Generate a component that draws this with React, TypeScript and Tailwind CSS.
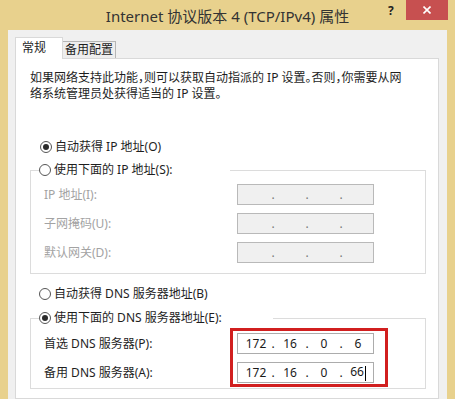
import React from "react";

// Windows 8 style "Internet 协议版本 4 (TCP/IPv4) 属性" dialog

const Radio = ({ checked = false }: { checked?: boolean }) => (
  <span className="inline-flex h-[12px] w-[12px] shrink-0 items-center justify-center rounded-full border border-[#555] bg-white">
    {checked && <span className="h-[6px] w-[6px] rounded-full bg-[#2b2b2b]" />}
  </span>
);

const RadioRow = ({ label, checked }: { label: string; checked?: boolean }) => (
  <span className="flex h-[16px] items-center gap-[3px] text-[#1e1e1e]">
    <Radio checked={checked} />
    <span className="whitespace-nowrap">{label}</span>
  </span>
);

interface IpBoxProps {
  parts: string[];
  disabled?: boolean;
  cursor?: boolean;
}

const IpBox = ({ parts, disabled = false, cursor = false }: IpBoxProps) => (
  <div
    className={
      "flex h-[21px] w-[137px] items-center border pl-[3px] " +
      (disabled
        ? "border-[#b9b9b9] bg-[#f0f0f0] text-[#7a7a7a]"
        : "border-[#acacac] bg-white text-[#1a1a1a]")
    }
  >
    {[0, 1, 2, 3].map((i) => (
      <React.Fragment key={i}>
        <span className="w-[30px] whitespace-nowrap text-center">
          {parts[i]}
          {cursor && i === 3 && (
            <span className="ml-px inline-block h-[15px] w-px bg-black align-middle" />
          )}
        </span>
        {i < 3 && <span className="w-[4px] text-center">.</span>}
      </React.Fragment>
    ))}
  </div>
);

const FieldRow = ({
  label,
  dim,
  children,
}: {
  label: string;
  dim?: boolean;
  children: React.ReactNode;
}) => (
  <div className="flex items-center">
    <span
      className={
        "w-[193px] whitespace-nowrap " + (dim ? "text-[#a3a3a3]" : "text-[#1e1e1e]")
      }
    >
      {label}
    </span>
    {children}
  </div>
);

export default function App() {
  return (
    <div className="flex h-[399px] w-[455px] flex-col overflow-hidden bg-[#e8d18d] font-['Noto_Sans','Noto_Sans_CJK_SC',sans-serif] text-[12px] leading-[16px] [font-feature-settings:'halt']">
      {/* title bar */}
      <div className="relative flex h-[30px] shrink-0 items-center justify-center">
        <span className="pt-px text-[15px] text-[#333]">Internet 协议版本 4 (TCP/IPv4) 属性</span>
        <span className="absolute left-[388px] top-[3px] text-[12px] font-bold text-[#222]">?</span>
        <span className="absolute right-[7px] top-0 flex h-[20px] w-[42px] items-center justify-center bg-[#c75050]">
          <svg width="8" height="8" viewBox="0 0 8 8">
            <path d="M0.5 0.5 L7.5 7.5 M7.5 0.5 L0.5 7.5" stroke="#fff" strokeWidth="1.6" />
          </svg>
        </span>
      </div>

      {/* dialog body */}
      <div className="mx-[8px] flex flex-1 flex-col bg-[#f0f0f0] pl-[7px] pt-[7px]">
        {/* tabs */}
        <div className="flex h-[21px] items-end">
          <div className="relative z-10 -mb-px h-[22px] w-[48px] border border-b-0 border-[#d9d9d9] bg-white pl-[6px] pt-[2px] text-[#1e1e1e]">
            常规
          </div>
          <div className="flex h-[17px] w-[53px] items-center justify-center border border-l-0 border-b-0 border-[#b5b5b5] bg-[#eeeeee] text-[#1e1e1e]">
            备用配置
          </div>
        </div>

        {/* tab page */}
        <div className="flex w-[424px] flex-1 flex-col border border-[#d9d9d9] bg-white">
          <p className="whitespace-nowrap pl-[14px] pt-[11px] text-[#1e1e1e]">
            如果网络支持此功能，则可以获取自动指派的 IP 设置。否则，你需要从网
            <br />
            络系统管理员处获得适当的 IP 设置。
          </p>

          <div className="ml-[24px] mt-[37px]">
            <RadioRow label="自动获得 IP 地址(O)" checked />
          </div>

          <fieldset className="ml-[14px] mt-[7px] w-[396px] border border-[#dcdcdc]">
            <legend className="ml-[8px] w-[191px] bg-white">
              <RadioRow label="使用下面的 IP 地址(S):" />
            </legend>
            <div className="flex flex-col gap-[8px] pb-[10px] pl-[13px] pt-[6px]">
              <FieldRow label="IP 地址(I):" dim>
                <IpBox parts={["", "", "", ""]} disabled />
              </FieldRow>
              <FieldRow label="子网掩码(U):" dim>
                <IpBox parts={["", "", "", ""]} disabled />
              </FieldRow>
              <FieldRow label="默认网关(D):" dim>
                <IpBox parts={["", "", "", ""]} disabled />
              </FieldRow>
            </div>
          </fieldset>

          <div className="ml-[23px] mt-[12px]">
            <RadioRow label="自动获得 DNS 服务器地址(B)" />
          </div>

          <fieldset className="ml-[14px] mt-[8px] w-[396px] border border-[#dcdcdc]">
            <legend className="ml-[8px] w-[234px] bg-white">
              <RadioRow label="使用下面的 DNS 服务器地址(E):" checked />
            </legend>
            <div className="relative flex flex-col gap-[8px] pb-[5px] pl-[13px] pt-[7px]">
              <FieldRow label="首选 DNS 服务器(P):">
                <IpBox parts={["172", "16", "0", "6"]} />
              </FieldRow>
              <FieldRow label="备用 DNS 服务器(A):">
                <IpBox parts={["172", "16", "0", "66"]} cursor />
              </FieldRow>
              {/* highlight annotation */}
              <div className="pointer-events-none absolute left-[199px] top-[2px] h-[59px] w-[158px] border-[3px] border-[#d11f1f]" />
            </div>
          </fieldset>
        </div>
      </div>
    </div>
  );
}
